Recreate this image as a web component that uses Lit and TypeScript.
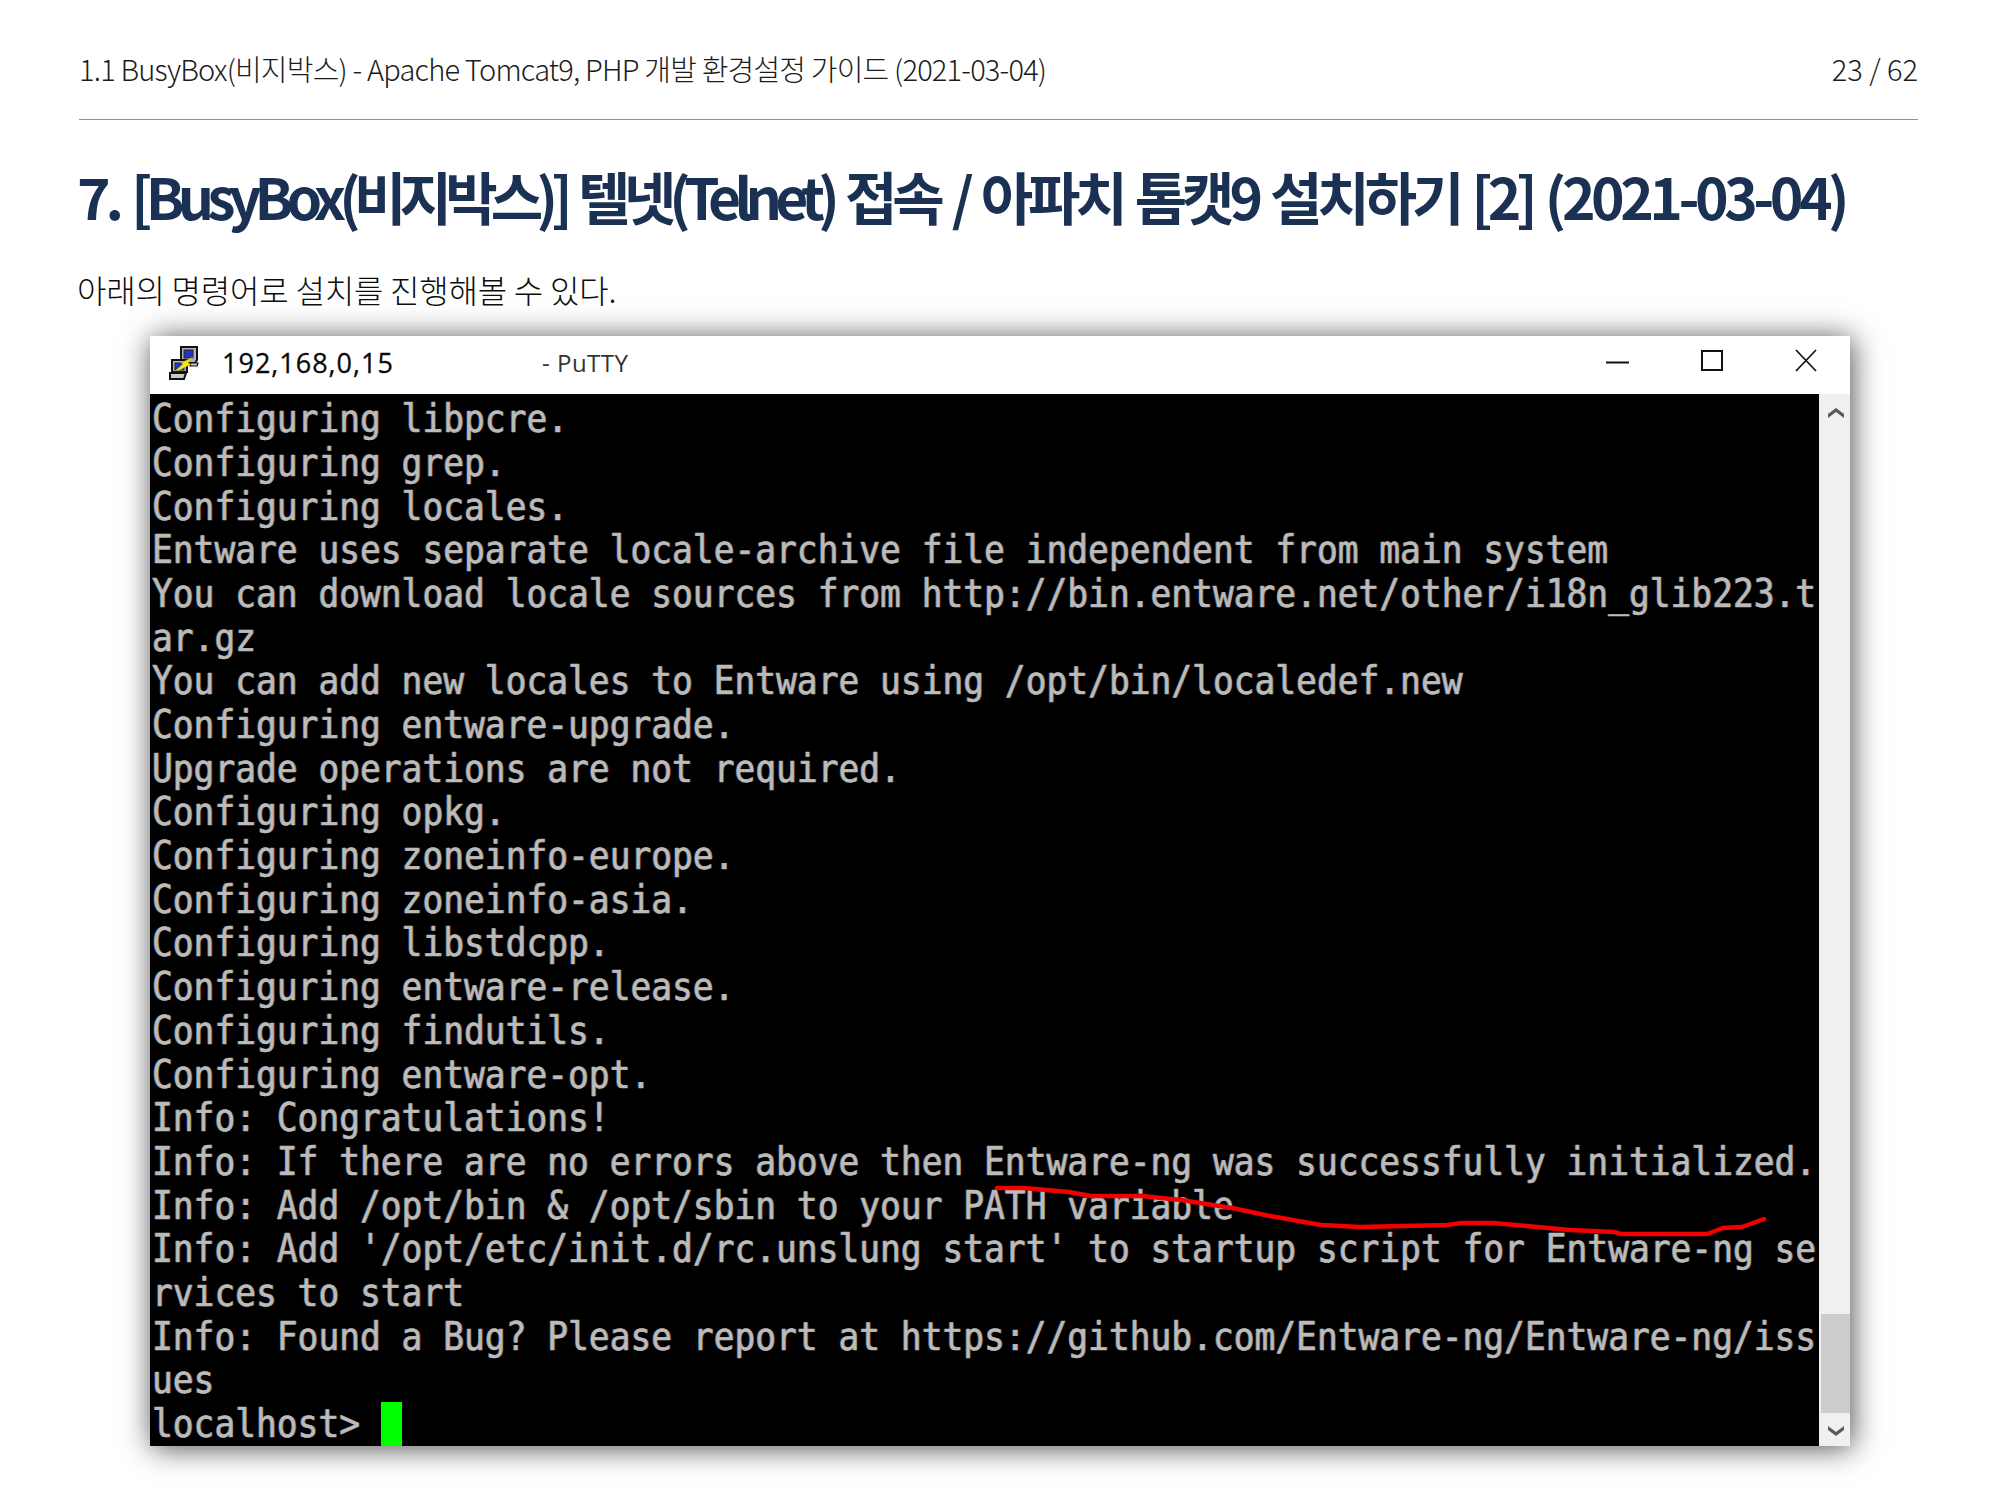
import { LitElement, html, css, svg } from "lit";
import { customElement } from "lit/decorators.js";

const LINES = [
  "Configuring libpcre.",
  "Configuring grep.",
  "Configuring locales.",
  "Entware uses separate locale-archive file independent from main system",
  "You can download locale sources from http://bin.entware.net/other/i18n_glib223.t",
  "ar.gz",
  "You can add new locales to Entware using /opt/bin/localedef.new",
  "Configuring entware-upgrade.",
  "Upgrade operations are not required.",
  "Configuring opkg.",
  "Configuring zoneinfo-europe.",
  "Configuring zoneinfo-asia.",
  "Configuring libstdcpp.",
  "Configuring entware-release.",
  "Configuring findutils.",
  "Configuring entware-opt.",
  "Info: Congratulations!",
  "Info: If there are no errors above then Entware-ng was successfully initialized.",
  "Info: Add /opt/bin & /opt/sbin to your PATH variable",
  "Info: Add '/opt/etc/init.d/rc.unslung start' to startup script for Entware-ng se",
  "rvices to start",
  "Info: Found a Bug? Please report at https://github.com/Entware-ng/Entware-ng/iss",
  "ues",
];

const RED = "847,794 874,794 919,798 941,802 992,802 1031,806 1082,814 1120,822 1171,831 1209,833 1298,831 1311,829 1343,829 1420,836 1464,838 1471,840 1557,840 1573,834 1592,833 1614,825";

@customElement("app-root")
export class AppRoot extends LitElement {
  static styles = css`
    :host {
      display: block;
      width: 2000px;
      height: 1500px;
      background: #fff;
      overflow: hidden;
      box-sizing: border-box;
      padding: 48px 82px 0 79px;
      font-family: "Noto Sans CJK KR", "Noto Sans", sans-serif;
    }
    .top {
      display: flex;
      justify-content: space-between;
      align-items: center;
      height: 40px;
      padding-bottom: 31px;
      border-bottom: 1px solid #8b93a3;
      font-size: 29px;
      font-weight: 300;
      letter-spacing: -0.8px;
      color: #1c1c1c;
    }
    .page {
      letter-spacing: 0;
    }
    h1 {
      margin: 33px 0 0 -2px;
      font-size: 57px;
      line-height: 84px;
      font-weight: 700;
      letter-spacing: -5.1px;
      word-spacing: 4.2px;
      color: #1b3153;
      white-space: nowrap;
    }
    .tight {
      letter-spacing: -6.8px;
    }
    .date {
      letter-spacing: -4.5px;
    }
    p {
      margin: 30px 0 0 -2px;
      font-size: 32px;
      line-height: 44px;
      font-weight: 300;
      letter-spacing: -0.2px;
      color: #0d0d0d;
    }
    .win {
      margin: 25px 0 0 71px;
      width: 1700px;
      height: 1110px;
      display: flex;
      flex-direction: column;
      background: #fff;
      box-shadow: 2px 2px 28px rgba(0, 0, 0, 0.7);
    }
    .bar {
      flex: none;
      box-sizing: border-box;
      height: 58px;
      padding-bottom: 5px;
      display: flex;
      align-items: center;
    }
    .bar svg.logo {
      margin-left: 17px;
      flex: none;
    }
    .ip {
      margin-left: 19px;
      width: 320px;
      font: 27px "Open Sans", "Noto Sans", sans-serif;
      letter-spacing: 1px;
      color: #0a0a0a;
      -webkit-text-stroke: 0.3px #0a0a0a;
    }
    .name {
      font: 24px "Open Sans", "Noto Sans", sans-serif;
      letter-spacing: 0.5px;
      color: #333;
    }
    .controls {
      margin-left: auto;
      margin-right: 32px;
      padding-bottom: 3px;
      display: flex;
      align-items: center;
      gap: 71px;
    }
    .body {
      flex: 1;
      display: flex;
      min-height: 0;
    }
    .term {
      flex: 1;
      position: relative;
      background: #000;
      overflow: hidden;
      padding: 3.2px 0 0 2px;
    }
    .lines {
      width: 1830px;
      transform: scaleX(0.9);
      transform-origin: 0 0;
    }
    .line {
      height: 43.7px;
      white-space: pre;
      font: 38.4px/43.7px "DejaVu Sans Mono", monospace;
      color: #bbbbbb;
      -webkit-text-stroke: 0.5px #bbbbbb;
      text-shadow: 1px 0 rgba(170, 105, 45, 0.55), -1px 0 rgba(65, 115, 175, 0.55);
    }
    .cursor {
      position: absolute;
      left: 231px;
      bottom: 0;
      width: 21px;
      height: 44px;
      background: #00ff00;
    }
    .red {
      position: absolute;
      left: 0;
      top: 0;
      pointer-events: none;
    }
    .scroll {
      flex: none;
      width: 31px;
      background: #f0f0f0;
      display: flex;
      flex-direction: column;
    }
    .arrow {
      flex: none;
      display: flex;
      align-items: center;
      justify-content: center;
      padding-left: 2px;
    }
    .arrow.up {
      height: 40px;
    }
    .arrow.down {
      height: 33px;
    }
    .track {
      flex: 1;
      display: flex;
      flex-direction: column;
      justify-content: flex-end;
    }
    .thumb {
      height: 99px;
      margin-left: 2px;
      background: #cdcdcd;
    }
  `;

  private logo() {
    return html`<svg class="logo" width="36" height="36" viewBox="0 0 36 36">
      <path d="M14 2h16v13l-2 3H14z" fill="#b5b5b5" stroke="#111" stroke-width="2" />
      <rect x="17" y="5" width="9" height="8" fill="#2038c0" stroke="#222" stroke-width="1" />
      <path d="M24 18h7l-1 3h-7z" fill="#c9c9c9" stroke="#111" stroke-width="1.2" />
      <path d="M5 15h15v12H5z" fill="#b5b5b5" stroke="#111" stroke-width="2" />
      <rect x="8" y="18" width="9" height="7" fill="#2038c0" stroke="#222" stroke-width="1" />
      <path d="M3 28h16l-2 6H3z" fill="#c9c9c9" stroke="#111" stroke-width="2" />
      <path d="M8 26l8-7-2-1 12-6-5 6 3 1-11 6z" fill="#f6e61c" stroke="#a89a18" stroke-width=".5" />
    </svg>`;
  }

  render() {
    return html`
      <div class="top">
        <span>1.1 BusyBox(비지박스) - Apache Tomcat9, PHP 개발 환경설정 가이드 (2021-03-04)</span>
        <span class="page">23 / 62</span>
      </div>
      <h1>7. <span class="tight">[BusyBox(비지박스)]</span> <span class="tight">텔넷(Telnet)</span> 접속 / 아파치 톰캣9 설치하기 [2] <span class="date">(2021-03-04)</span></h1>
      <p>아래의 명령어로 설치를 진행해볼 수 있다.</p>
      <div class="win">
        <div class="bar">
          ${this.logo()}
          <span class="ip">192,168,0,15</span>
          <span class="name">- PuTTY</span>
          <div class="controls">
            <svg width="24" height="24" viewBox="0 0 24 24"><path d="M0 13.5h23" stroke="#111" stroke-width="2" /></svg>
            <svg width="22" height="24" viewBox="0 0 22 24"><rect x="1" y="2" width="20" height="19" fill="none" stroke="#111" stroke-width="2" /></svg>
            <svg width="24" height="24" viewBox="0 0 24 24"><path d="M2 1l20 21M22 1L2 22" stroke="#111" stroke-width="1.7" fill="none" /></svg>
          </div>
        </div>
        <div class="body">
          <div class="term">
            <div class="lines">
              ${LINES.map((l) => html`<div class="line">${l}</div>`)}
              <div class="line">localhost&gt;</div>
            </div>
            <div class="cursor"></div>
            <svg class="red" width="1669" height="1052" viewBox="0 0 1669 1052">
              ${svg`<polyline points=${RED} fill="none" stroke="#f00000" stroke-width="4.5" stroke-linejoin="round" stroke-linecap="round"></polyline>`}
            </svg>
          </div>
          <div class="scroll">
            <div class="arrow up">
              <svg width="16" height="12" viewBox="0 0 16 12"><path d="M0 10l8-6 8 6V6L8 0 0 6z" fill="#5a5a5a" /></svg>
            </div>
            <div class="track"><div class="thumb"></div></div>
            <div class="arrow down">
              <svg width="16" height="12" viewBox="0 0 16 12"><path d="M0 2l8 6 8-6v4l-8 6-8-6z" fill="#5a5a5a" /></svg>
            </div>
          </div>
        </div>
      </div>
    `;
  }
}
